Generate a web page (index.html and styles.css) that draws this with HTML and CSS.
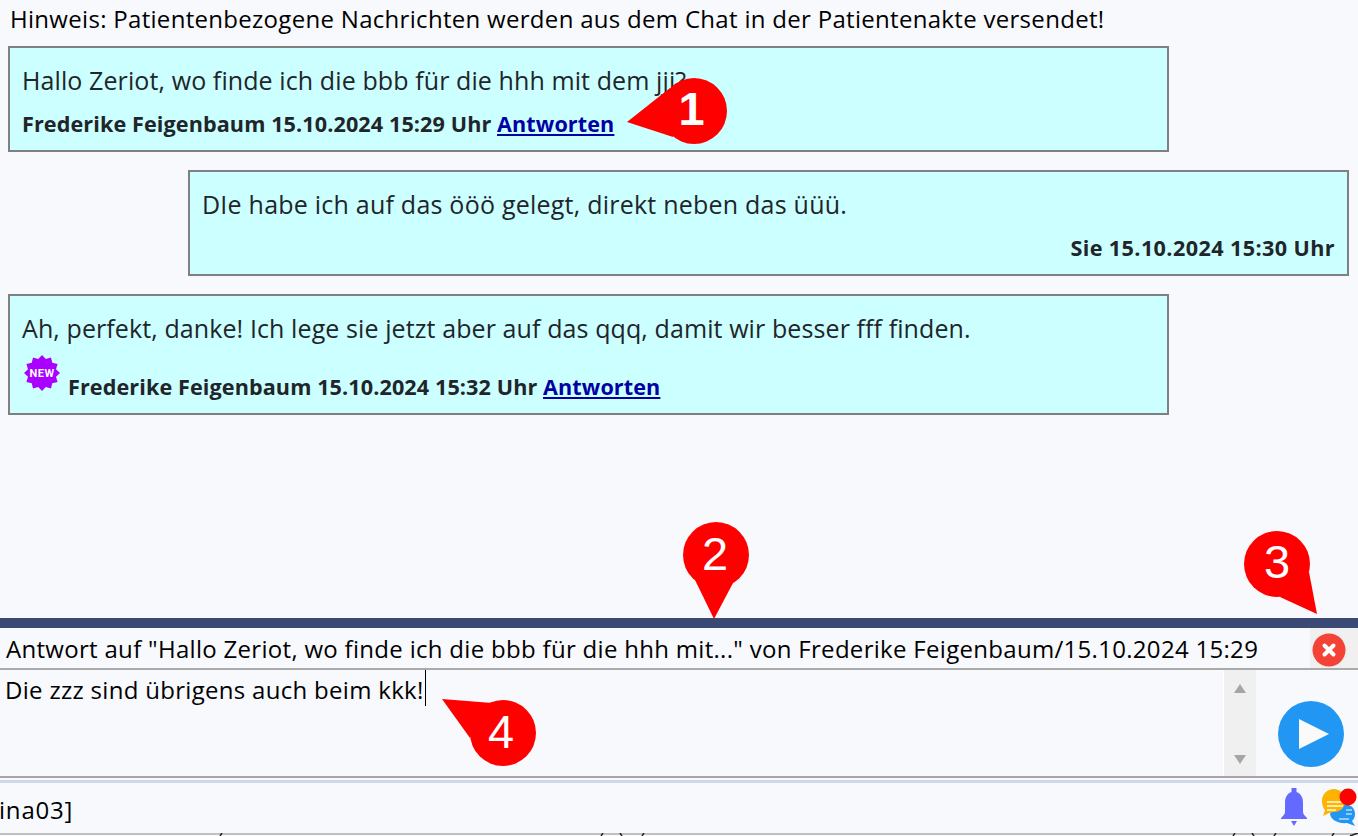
FILE: index.html
```html
<!DOCTYPE html>
<html lang="de">
<head>
<meta charset="utf-8">
<title>Chat</title>
<link rel="stylesheet" href="styles.css">
</head>
<body>
<div class="app">
  <main class="chat">
    <p class="hint">Hinweis: Patientenbezogene Nachrichten werden aus dem Chat in der Patientenakte versendet!</p>
    <article class="msg">
      <p class="msg-text">Hallo Zeriot, wo finde ich die bbb für die hhh mit dem jjj?</p>
      <p class="msg-meta">Frederike Feigenbaum 15.10.2024 15:29 Uhr <a href="#">Antworten</a></p>
    </article>
    <article class="msg own">
      <p class="msg-text">DIe habe ich auf das ööö gelegt, direkt neben das üüü.</p>
      <p class="msg-meta">Sie 15.10.2024 15:30 Uhr</p>
    </article>
    <article class="msg with-badge">
      <p class="msg-text">Ah, perfekt, danke! Ich lege sie jetzt aber auf das qqq, damit wir besser fff finden.</p>
      <p class="msg-meta">
        <svg class="new-badge" viewBox="0 0 36 36" width="36" height="36">
          <polygon fill="#aa00ff" points="18,0 21.75,4 27,2.41 28.25,7.75 33.59,9 32,14.25 36,18 32,21.75 33.59,27 28.25,28.25 27,33.59 21.75,32 18,36 14.25,32 9,33.59 7.75,28.25 2.41,27 4,21.75 0,18 4,14.25 2.41,9 7.75,7.75 9,2.41 14.25,4"/>
          <text x="18" y="22" class="new-label">NEW</text>
        </svg>
        <span>Frederike Feigenbaum 15.10.2024 15:32 Uhr <a href="#">Antworten</a></span>
      </p>
    </article>
  </main>

  <section class="composer">
    <div class="reply-row">
      <span class="reply-text">Antwort auf "Hallo Zeriot, wo finde ich die bbb für die hhh mit..." von Frederike Feigenbaum/15.10.2024 15:29</span>
      <button class="cancel" type="button" aria-label="Abbrechen">
        <svg viewBox="0 0 34 34" width="34" height="34">
          <circle cx="17" cy="17" r="16.500" fill="#f44336"/>
          <path d="M12.500 12.500 L21.500 21.500 M21.500 12.500 L12.500 21.500" stroke="#fff" stroke-width="4" stroke-linecap="round"/>
        </svg>
      </button>
    </div>
    <div class="input-row">
      <div class="input-text">Die zzz sind übrigens auch beim kkk!<span class="caret"></span></div>
      <div class="scrollbar">
        <svg viewBox="0 0 12 9" width="12" height="9"><path d="M6 0 L12 9 H0 Z" fill="#a6a6a6"/></svg>
        <svg viewBox="0 0 12 9" width="12" height="9"><path d="M0 0 H12 L6 9 Z" fill="#a6a6a6"/></svg>
      </div>
      <div class="send-cell">
        <svg viewBox="0 0 66 66" width="66" height="66">
          <circle cx="33" cy="33" r="33" fill="#2196f3"/>
          <path d="M21 18 L51 33 L21 48 Z" fill="#fafafa"/>
        </svg>
      </div>
    </div>
  </section>

  <footer class="status">
    <span class="status-text">ina03]</span>
    <div class="status-icons">
      <svg class="bell" viewBox="0 0 26 38" width="26" height="38">
        <path fill="#6469ff" d="M10.500 0 H15.500 V4 C20.500 6 22 10 22 15 V24 C22 26 24 28 26 30 V31 H0 V30 C2 28 4 26 4 24 V15 C4 10 5.500 6 10.500 4 Z"/>
        <path fill="#6469ff" d="M10 33 H16 L13 38 Z"/>
      </svg>
      <svg class="chat-icon" viewBox="0 0 36 38" width="36" height="38">
        <path fill="#2196f3" d="M20 17 C27 15 33 19 33 26 C33 29 32 31 30 33 L33 38 L25 35 C17 36 8 32 8 25 Z"/>
        <path fill="#ffb300" d="M12 1 C18 1 23 6 23 13 C23 20 18 24 12 24 L7 25 L1 28 L3 22 C1 20 0 17 0 13 C0 6 5 1 12 1 Z"/>
        <path stroke="#ffe9a8" stroke-width="2" d="M5 14 H21 M5 18 H21 M5 22 H14"/>
        <path stroke="#b6dcfb" stroke-width="1.500" d="M24 22 H30 M24 26 H30 M17 31 H27"/>
        <circle cx="26" cy="9" r="8.500" fill="#ff0000"/>
      </svg>
    </div>
  </footer>

  <div class="clipped">
    <svg class="clip-marks" viewBox="0 0 1358 3" width="1358" height="3">
      <path d="M222 0 L220 3 M603 0 L601 3 M620 0 L622 3 M644 0 L642 3 M1235 0 L1233 3 M1252 0 L1254 3 M1276 0 L1274 3 M1334 0 L1332 3 M1358 0 L1350 3" stroke="#222" stroke-width="1.500" fill="none"/>
    </svg>
  </div>
</div>

<svg class="pin pin1" viewBox="0 0 100 68" width="100" height="68">
  <circle cx="67" cy="33" r="33" fill="#f00"/>
  <path fill="#f00" d="M0 44 L43 10 L46 59 Z"/>
  <text x="64.500" y="47" class="pin-label pin-label-bold">1</text>
</svg>
<svg class="pin pin2" viewBox="0 0 68 98" width="68" height="98">
  <circle cx="34" cy="33" r="33" fill="#f00"/>
  <path fill="#f00" d="M32 97 L13 58 L51 61 Z"/>
  <text x="33" y="48" class="pin-label">2</text>
</svg>
<svg class="pin pin3" viewBox="0 0 74 84" width="74" height="84">
  <circle cx="33" cy="33" r="33" fill="#f00"/>
  <path fill="#f00" d="M73 83 L65 41 L36 66 Z"/>
  <text x="33" y="47" class="pin-label">3</text>
</svg>
<svg class="pin pin4" viewBox="0 0 96 70" width="96" height="70">
  <circle cx="61" cy="34" r="33" fill="#f00"/>
  <path fill="#f00" d="M0 0 L50 4 L28 39 Z"/>
  <text x="59" y="49" class="pin-label">4</text>
</svg>
</body>
</html>
```

FILE: styles.css
```css
* { box-sizing: border-box; }
html, body { margin: 0; height: 100%; }
body {
  position: relative;
  overflow: hidden;
  background: #f8f9fd;
  color: #000;
  font-family: "Open Sans", "Noto Sans", "Liberation Sans", sans-serif;
}
.app { height: 836px; display: flex; flex-direction: column; }
.chat { flex: 0 0 618px; padding: 0 9px 0 8px; overflow: hidden; display: flex; flex-direction: column; }
.hint { margin: 0 0 11px 2px; height: 35px; font-size: 24px; line-height: 37px; letter-spacing: 0.3px; white-space: nowrap; }
.msg {
  width: 1161px;
  height: 106px;
  margin-bottom: 18px;
  padding: 14px 12px 0;
  background: #ccffff;
  border: 2px solid #808080;
  color: #212529;
}
.msg.own { align-self: flex-end; }
.msg.with-badge { height: 121px; }
.msg-text { margin: 0; font-size: 25px; line-height: 36px; letter-spacing: 0.1px; white-space: nowrap; }
.msg-meta { margin: 11px 0 0; font-size: 21.600px; line-height: 30px; font-weight: 700; white-space: nowrap; letter-spacing: 0.1px; }
.msg.own .msg-text { letter-spacing: 0.23px; }
.msg.own .msg-meta { text-align: right; letter-spacing: 0.4px; }
.msg.with-badge .msg-meta { display: flex; align-items: flex-end; gap: 8px; margin-top: 7px; padding-left: 2px; height: 49px; }
.msg a { color: #0000a5; text-decoration: underline; }
.new-badge { display: block; margin-bottom: 11px; flex: none; }
.new-label { font: 700 11px "Roboto", sans-serif; letter-spacing: 0.5px; fill: #fff; text-anchor: middle; }

.composer { flex: 0 0 160px; border-top: 10px solid #3a4a75; display: flex; flex-direction: column; }
.reply-row { height: 42px; display: flex; justify-content: space-between; border-bottom: 2px solid #aaa; }
.reply-text { padding-left: 6px; font-size: 24px; line-height: 41px; letter-spacing: 0.3px; white-space: nowrap; }
.cancel { width: 48px; padding: 3px 0 0; border: 0; background: #f0f0f0; }
.cancel svg { display: block; margin-left: 2px; }
.input-row { flex: 1; display: flex; border-bottom: 2px solid #a6a6a6; }
.input-text { flex: 1; padding-left: 5px; font-size: 24px; line-height: 40px; letter-spacing: 0.3px; white-space: nowrap; }
.caret { display: inline-block; width: 1px; height: 36px; margin-left: 1px; background: #000; vertical-align: top; }
.scrollbar { width: 33px; background: #f0f0f0; border-left: 1px solid #fff; display: flex; flex-direction: column; justify-content: space-between; align-items: center; padding: 14px 0 12px; }
.scrollbar svg { display: block; }
.send-cell { width: 102px; padding: 31px 0 0 22px; }
.send-cell svg { display: block; }

.status { height: 53px; margin-top: 2px; border-top: 3px solid #d0d8e8; display: flex; justify-content: space-between; align-items: flex-start; }
.status-text { font-size: 24px; line-height: 54px; letter-spacing: 0.8px; margin-left: -1px; }
.status-icons { display: flex; gap: 15px; padding-top: 5px; }
.bell, .chat-icon { display: block; }
.clipped { height: 3px; background: linear-gradient(#c0c0c0 2px, #f8f9fd 2px); overflow: hidden; }
.clip-marks { display: block; }

.pin { position: absolute; display: block; overflow: visible; }
.pin-label { font: 400 47px "Liberation Sans", sans-serif; fill: #fff; text-anchor: middle; }
.pin-label-bold { font-weight: 700; }
.pin1 { left: 627px; top: 78px; }
.pin2 { left: 682px; top: 522px; }
.pin3 { left: 1244px; top: 531px; }
.pin4 { left: 442px; top: 699px; }
```
